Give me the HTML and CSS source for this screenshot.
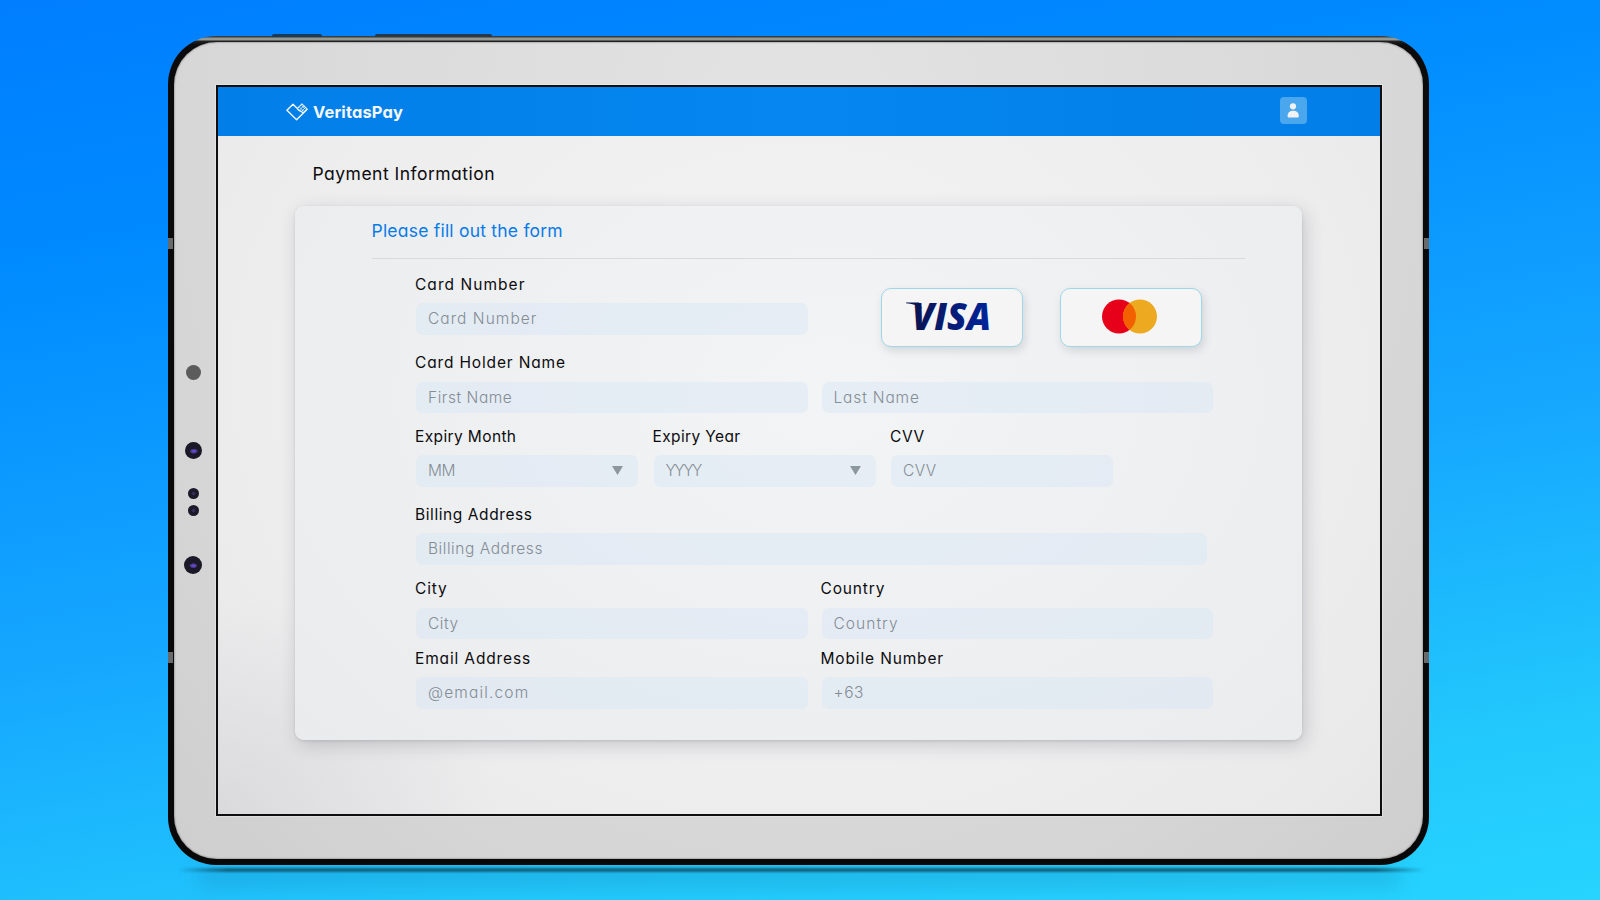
FILE: index.html
```html
<!DOCTYPE html>
<html lang="en">
<head>
<meta charset="utf-8">
<title>VeritasPay – Payment Information</title>
<link rel="stylesheet" href="styles.css">
</head>
<body>
<main class="stage">
  <div class="tablet">
    <span class="key key-power"></span><span class="key key-volume"></span>
    <span class="band band-lt"></span><span class="band band-lb"></span>
    <span class="band band-rt"></span><span class="band band-rb"></span>
    <div class="bezel">
      <div class="sensors">
        <i class="sensor dot"></i><i class="sensor lens"></i><i class="sensor small"></i><i class="sensor small second"></i><i class="sensor lens large"></i>
      </div>
      <div class="screen">
        <header class="topbar">
          <div class="brand">
            <svg class="brand-mark" viewBox="0 0 22 18" fill="none" stroke="#f4f7fb" stroke-width="1.4" stroke-linejoin="round" stroke-linecap="round">
              <path d="M7 1.2 0.9 7.2 10.6 16.8 20.9 6.4M7 1.2 11.1 5.3C12 6.8 13.4 8 15 8.2L17 9.8"/>
              <path d="M11.8 5 16 0.9 21.2 6.1 17.2 9.8" stroke-width="1.1" stroke-dasharray="1.6 1"/>
              <path d="M14 4.6 17.6 8.2M16 2.8 19.2 6M14.2 6.4 17.6 3M16 8 19.2 4.8" stroke-width=".8"/>
            </svg>
            <span class="brand-name">VeritasPay</span>
          </div>
          <div class="avatar">
            <svg viewBox="0 0 27 27" fill="#f2f2f2"><circle cx="13" cy="9.3" r="3.1"/><path d="M7.6 19.1c0-3.6 2.4-5.3 5.6-5.3s5.6 1.7 5.6 5.3c0 1-.5 1.5-1.4 1.5H9c-.9 0-1.4-.5-1.4-1.5Z"/></svg>
          </div>
        </header>
        <h1 class="title"><span>Payment Information</span></h1>
        <section class="card">
          <h2 class="subtitle">Please fill out the form</h2>
          <form class="form">
            <div class="row row-number">
              <label class="field half"><span class="label wide">Card Number</span><input class="input wide" placeholder="Card Number"></label>
              <div class="brands">
                <div class="pay"><svg viewBox="0 0 142 59">
                  <defs><linearGradient id="navy" x1="0" x2="1"><stop offset="0" stop-color="#0b1450"/><stop offset="1" stop-color="#00249c"/></linearGradient></defs>
                  <text class="visa" x="31" y="41.5" textLength="79" lengthAdjust="spacingAndGlyphs" fill="url(#navy)">VISA</text>
                  <path d="M25 14.6H38l3 6C36 17 31 15.8 25 15.2Z" fill="#0b1450"/>
                </svg></div>
                <div class="pay"><svg viewBox="0 0 142 59">
                  <circle cx="59" cy="28.5" r="17" fill="#e6001a"/><circle cx="80" cy="28.5" r="17" fill="#edaa20"/>
                  <path d="M69.5 15.1a17 17 0 0 1 0 26.8a17 17 0 0 1 0-26.8Z" fill="#f26000"/>
                </svg></div>
              </div>
            </div>
            <div class="row row-name">
              <label class="field half"><span class="label loose">Card Holder Name</span><input class="input" placeholder="First Name"></label>
              <label class="field half-end"><input class="input loose" placeholder="Last Name"></label>
            </div>
            <div class="row row-expiry">
              <div class="field third"><span class="label tight">Expiry Month</span><div class="input select"><span class="tight-2">MM</span><svg viewBox="0 0 11 9"><path d="M0 0H11L5.5 9Z"/></svg></div></div>
              <div class="field third"><span class="label tight">Expiry Year</span><div class="input select"><span class="tight-3">YYYY</span><svg viewBox="0 0 11 9"><path d="M0 0H11L5.5 9Z"/></svg></div></div>
              <label class="field third"><span class="label">CVV</span><input class="input tight" placeholder="CVV"></label>
            </div>
            <div class="row row-billing">
              <label class="field full"><span class="label">Billing Address</span><input class="input" placeholder="Billing Address"></label>
            </div>
            <div class="row row-city">
              <label class="field half"><span class="label loose">City</span><input class="input" placeholder="City"></label>
              <label class="field half-end"><span class="label loose">Country</span><input class="input wide" placeholder="Country"></label>
            </div>
            <div class="row row-contact">
              <label class="field half"><span class="label loose">Email Address</span><input class="input widest" placeholder="@email.com"></label>
              <label class="field half-end"><span class="label loose">Mobile Number</span><input class="input" placeholder="+63"></label>
            </div>
          </form>
        </section>
      </div>
    </div>
  </div>
</main>
</body>
</html>
```

FILE: styles.css
```css
* { box-sizing: border-box; }
body { margin: 0; font-family: Inter, "Liberation Sans", sans-serif; font-feature-settings: "cv11" 1; color: #0c0c0e; }
.stage { position: relative; z-index: 0; width: 1600px; height: 900px; overflow: hidden; padding: 36px 0 0 168px; background: linear-gradient(170deg, #007eff 0%, #008aff 22%, #16a8ff 58%, #22c8fc 84%, #26d4ff 100%); }

.tablet { position: relative; width: 1261px; height: 829px; padding: 6px; border-radius: 48px; background: linear-gradient(180deg, #3a3d3e 0, #3a3d3e 1px, #92978f 2px, #959a96 4px, #222 5px, #0b0b0b 9px, #080808 100%); }
.tablet::after { content: ""; position: absolute; z-index: -1; left: 10px; right: 4px; bottom: -7px; height: 4px; background: linear-gradient(90deg, transparent, #0f6480 4%, #0f6480 96%, transparent); filter: blur(.8px); }
.tablet::before { content: ""; position: absolute; z-index: -1; left: 30px; right: 30px; bottom: -22px; height: 20px; background: rgba(20,110,150,.2); filter: blur(9px); }
.key { position: absolute; top: -2px; height: 3px; background: #1a3a5c; border-radius: 2px 2px 0 0; }
.key-power { left: 104px; width: 50px; }
.key-volume { left: 207px; width: 117px; background: #27384a; }
.band { position: absolute; width: 5px; height: 11px; background: #686a6b; }
.band-lt { left: 0; top: 202px; }
.band-lb { left: 0; top: 616px; }
.band-rt { right: 0; top: 202px; }
.band-rb { right: 0; top: 616px; }

.bezel { display: flex; height: 817px; padding: 43px 0 0 0; border-radius: 43px; background: radial-gradient(ellipse at 50% 12%, #e3e3e3 0, #dbdbdb 50%, #d5d5d5 78%, #cecece 100%); box-shadow: inset 0 0 2px #555; }
.sensors { display: flex; flex-direction: column; align-items: center; width: 42px; padding-right: 4px; padding-top: 280px; }
.sensor { display: block; flex: none; border-radius: 50%; background: radial-gradient(circle, #37305f 0 12%, #1b1929 30%, #1d1a27 100%); }
.dot { width: 15px; height: 15px; background: #5c5c5c; }
.lens { width: 17px; height: 17px; margin-top: 62px; background: radial-gradient(ellipse 4px 2.5px at 52% 54%, #6449c8 0 35%, #302653 100%, transparent), #1b1827; }
.small { width: 11px; height: 11px; margin-top: 29px; }
.second { margin-top: 6px; }
.large { width: 18px; height: 18px; margin-top: 40px; }

.screen { width: 1165.5px; height: 731px; border: 2.5px solid #0e0e0e; outline: 1px solid rgba(255,255,255,.3); background: radial-gradient(ellipse 24% 30% at 0 100%, rgba(205,205,210,.5), transparent), radial-gradient(ellipse 75% 100% at 50% 40%, #f3f3f4 0, #eeeeef 55%, #e9e9ea 85%, #e0e0e2 100%); }
.topbar { display: flex; justify-content: space-between; height: 49px; padding: 0 72.5px 0 68px; background: linear-gradient(90deg, #027ee8, #0586f0 50%, #027ee8); }
.brand { display: flex; align-items: center; gap: 5px; }
.brand-mark { width: 22px; height: 18px; }
.brand-name { font-size: 16.5px; line-height: 22px; font-weight: 700; letter-spacing: .12px; color: #f4f7fb; }
.avatar { width: 27px; height: 27px; margin-top: 9.5px; border-radius: 4px; background: #4aa7ee; }
.avatar svg { display: block; width: 27px; height: 27px; }
.title { margin: 24px 0 0 94.5px; height: 28px; font-size: 17.5px; line-height: 28px; font-weight: 400; letter-spacing: .48px; }

.card { width: 1007px; height: 534px; margin: 18px 0 0 76.5px; border-radius: 9px; padding: 8px 57px 0 77px; background: radial-gradient(ellipse 72% 100% at 53% 35%, #f3f4f5 0, #eeeff1 55%, #eaebec 100%); box-shadow: 3px 5px 18px rgba(50,50,60,.2), 0 1px 3px rgba(50,50,60,.12); }
.subtitle { height: 45px; margin: 0; border-bottom: 1px solid #d8dadc; font-size: 17.5px; line-height: 33px; font-weight: 400; letter-spacing: .22px; color: #087be8; }
.form { padding: 15.5px 0 0 44.5px; }
.row { display: flex; align-items: flex-end; }
.row-number { gap: 73px; }
.row-name { gap: 13.5px; margin-top: 18.5px; }
.row-expiry { gap: 15.5px; margin-top: 13.5px; }
.row-billing { margin-top: 18px; }
.row-city, .row-contact { gap: 13.5px; }
.row-city { margin-top: 14.5px; }
.row-contact { margin-top: 9.5px; }
.field { display: flex; flex-direction: column; flex: none; }
.half { width: 392px; }
.half-end { width: 391px; }
.third { width: 222px; }
.full { width: 791px; }
.label { margin: 0 0 8.5px -1px; font-size: 15.5px; line-height: 20px; letter-spacing: .58px; white-space: nowrap; }
.input { display: block; width: 100%; height: 31.5px; margin: 0; border: 0; border-radius: 7px; padding: 0 12px; outline: 0; font: 300 15.5px/31.5px Inter, "Liberation Sans", sans-serif; font-feature-settings: inherit; letter-spacing: .55px; color: #858d94; background: rgba(208,228,246,.36); }
.input::placeholder { color: #858d94; opacity: 1; }
.label.tight, .input.tight { letter-spacing: .38px; }
.label.loose, .input.loose { letter-spacing: .85px; }
.label.wide, .input.wide { letter-spacing: 1.05px; }
.input.widest { letter-spacing: 1.15px; }
.tight-2 { letter-spacing: -.4px; }
.tight-3 { letter-spacing: -1.5px; }
.select { display: flex; justify-content: space-between; align-items: center; padding-right: 15px; }
.select svg { width: 11px; height: 9px; fill: #8d979f; }

.brands { display: flex; gap: 36.5px; margin-bottom: -12px; }
.pay { width: 142px; height: 59px; border: 1px solid #9fd7e8; border-radius: 10px; background: #f5f5f6; box-shadow: 2px 4px 9px rgba(60,70,80,.16); }
.pay svg { display: block; width: 142px; height: 59px; margin: -1px; }
.visa { font: italic 800 37px "Open Sans", sans-serif; }
```
